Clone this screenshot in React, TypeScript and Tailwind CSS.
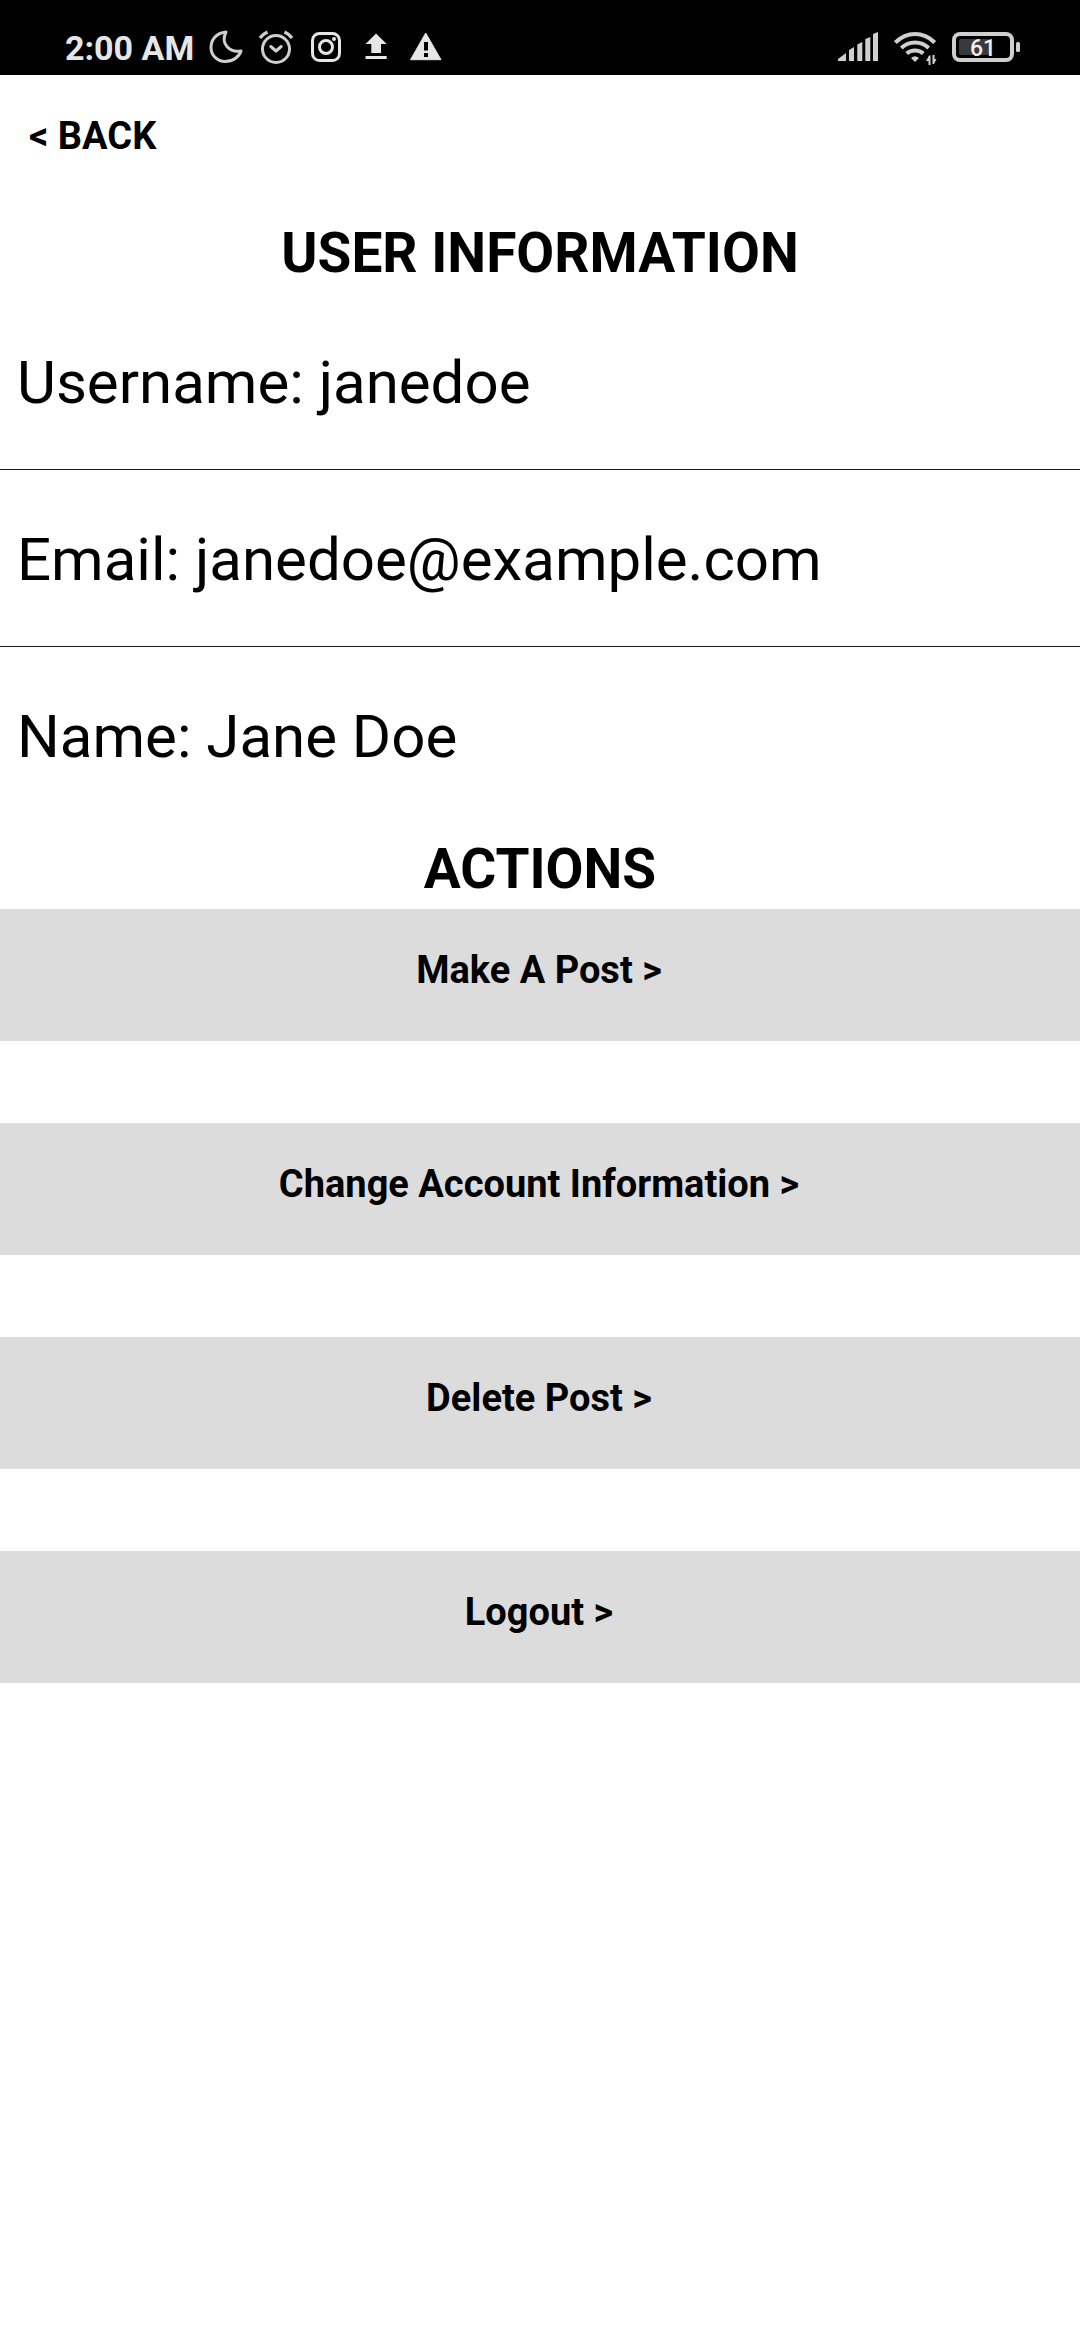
const details = [
  { label: "Username", value: "janedoe" },
  { label: "Email", value: "janedoe@example.com" },
  { label: "Name", value: "Jane Doe" },
];

const actions = ["Make A Post", "Change Account Information", "Delete Post", "Logout"];

function StatusBar() {
  return (
    <div className="flex h-[75px] items-center justify-between bg-black pt-[21px] pr-[59px] pl-[65px]">
      <div className="flex items-center gap-3.5 text-[#e6e6e6]">
        <span className="text-[34px] leading-10 font-bold">2:00 AM</span>
        {/* do not disturb */}
        <svg width="36" height="36" viewBox="0 0 36 36" fill="none" stroke="#cfcfcf" strokeWidth="3" strokeLinejoin="round">
          <path d="M18 2C8 3 3 10 3 17.5C3 26 10 31.5 17 31.5C25 31.5 31 27 33 21C22 23 12 14 18 2Z" />
        </svg>
        {/* alarm */}
        <svg width="36" height="36" viewBox="0 0 36 36" fill="none" stroke="#cfcfcf" strokeWidth="3" strokeLinecap="round">
          <circle cx="18" cy="19" r="13.5" />
          <path d="M12.8 16.5L18 21L23.2 16.5" strokeLinejoin="round" />
          <path d="M2 8Q5 4 9.5 2M26.5 2Q31 4 34 8" strokeWidth="3.5" strokeLinecap="butt" />
        </svg>
        {/* instagram */}
        <svg width="36" height="36" viewBox="0 0 36 36" fill="none" stroke="currentColor" strokeWidth="3">
          <rect x="4.5" y="3.5" width="27" height="27" rx="7" />
          <circle cx="18" cy="17" r="6.5" />
          <circle cx="26" cy="9" r="2" fill="currentColor" stroke="none" />
        </svg>
        {/* upload */}
        <svg width="36" height="36" viewBox="0 0 36 36" fill="currentColor">
          <path d="M18 3.5L28.7 14H23V23H13.3V14H7.5ZM7.5 26H28.7V29H7.5Z" />
        </svg>
        {/* warning */}
        <svg width="36" height="36" viewBox="0 0 36 36">
          <path d="M17.7 3L33 29.7H2.5Z" fill="currentColor" stroke="currentColor" strokeLinejoin="round" />
          <path d="M16 12H20V20.5H16ZM16 23H20V27H16Z" fill="black" />
        </svg>
      </div>
      <div className="flex items-center gap-3.5 text-[#cfcfcf]">
        {/* signal */}
        <svg width="42" height="36" viewBox="0 0 42 36" fill="currentColor">
          <path d="M1 29L9 23V31H1ZM12 20L17 17V31H12ZM20.3 14.5L25.3 12V31H20.3ZM28.3 9L33.3 7V31H28.3ZM36 4L41 2V31H36Z" />
        </svg>
        {/* wifi */}
        <svg width="44" height="36" viewBox="0 0 44 36" fill="none" stroke="currentColor" strokeWidth="4">
          <path d="M2.3 12.5Q11 4 22 4T41.7 12.5" />
          <path d="M8.3 18Q14 12.5 22 12.5T35.7 18" />
          <path d="M13.7 23.5Q17 20.5 22 20.5T30.3 23.5" />
          <path d="M18 28Q22 24.5 26 28L22 32Z" fill="currentColor" stroke="none" />
          <path d="M33 31L36 25.5H37.5V35H35.5V31ZM39.5 25H41.5V29H43.5L41 34H39.5Z" fill="currentColor" stroke="none" />
        </svg>
        {/* battery */}
        <svg width="70" height="36" viewBox="0 0 70 36">
          <rect x="3" y="4" width="58" height="26" rx="6" fill="none" stroke="currentColor" strokeWidth="4" />
          <rect x="8" y="9" width="30" height="16" rx="2" fill="#3a3a3a" />
          <rect x="65" y="12" width="4" height="10" rx="1.5" fill="currentColor" />
          <text x="32" y="26" textAnchor="middle" fill="#f0f0f0" className="text-[23px] font-medium">
            61
          </text>
        </svg>
      </div>
    </div>
  );
}

export default function App() {
  return (
    <div className="min-h-screen bg-white font-[Roboto,sans-serif] text-black">
      <StatusBar />
      <button type="button" className="mt-9 ml-[29px] block text-[38px] leading-[50px] font-bold">
        &lt; BACK
      </button>
      <h1 className="mt-[52px] text-center text-[55px] leading-20 font-bold">USER INFORMATION</h1>
      <div className="divide-y divide-[#1c1c1c]">
        {details.map((item) => (
          <p key={item.label} className="px-[17px] pt-[50px] pb-[46px] text-[60px] leading-20">
            {item.label}: {item.value}
          </p>
        ))}
      </div>
      <h2 className="mt-1.5 text-center text-[55px] leading-20 font-bold">ACTIONS</h2>
      <div className="flex flex-col gap-[82px]">
        {actions.map((action) => (
          <button key={action} type="button" className="h-[132px] bg-[#dcdcdc] pr-[2px] pb-2.5 text-[38px] leading-[50px] font-bold">
            {action} &gt;
          </button>
        ))}
      </div>
    </div>
  );
}
